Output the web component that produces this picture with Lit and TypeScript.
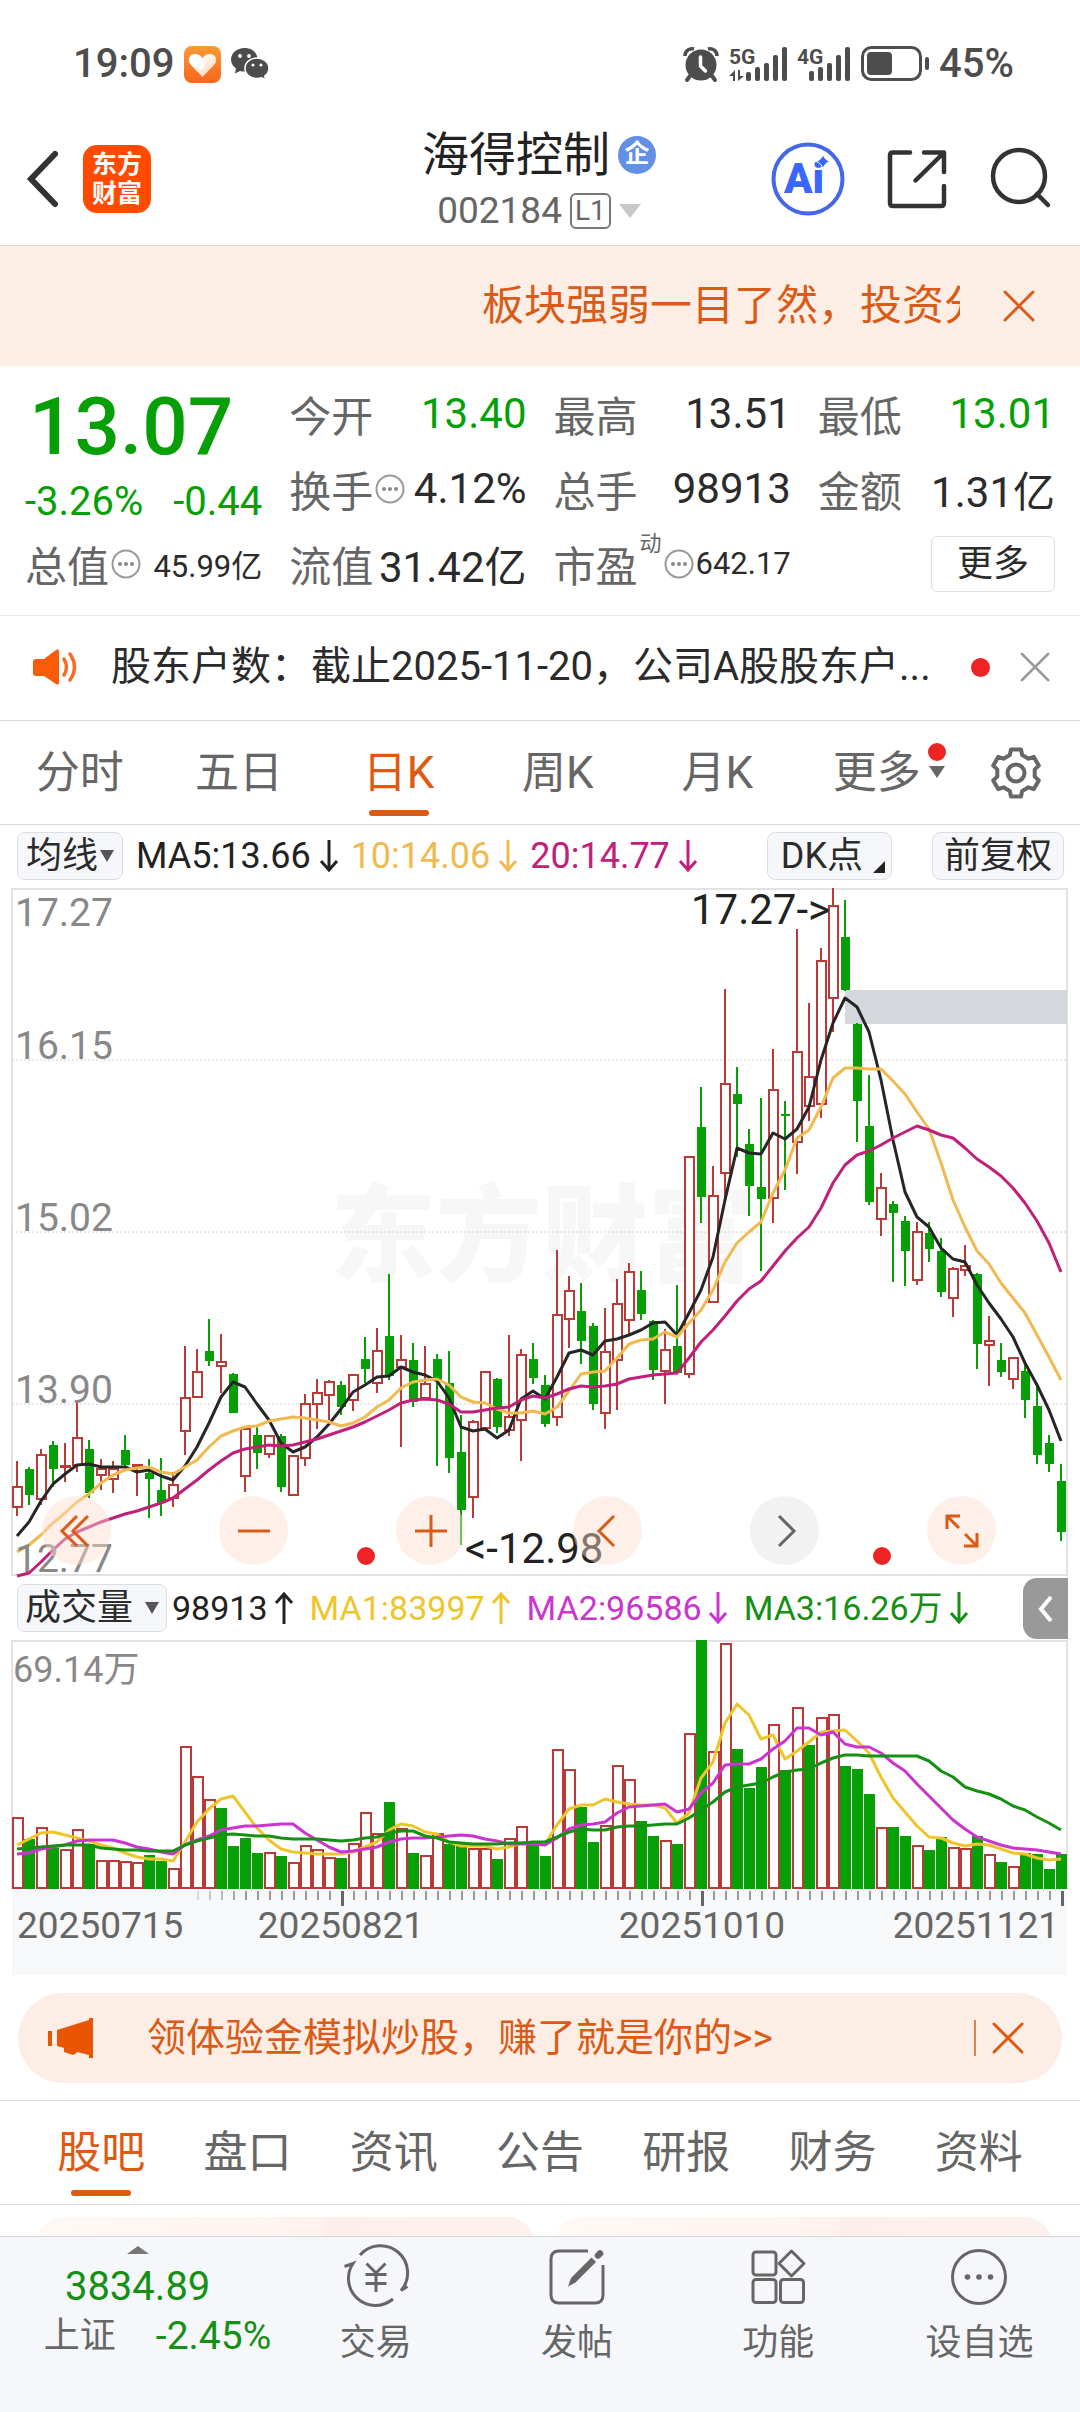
import { LitElement, html, svg, css } from "lit";
import { customElement, property, state } from "lit/decorators.js";
import { classMap } from "lit/directives/class-map.js";

/* ---------- chart data ---------- */

// One day: [direction, high, body top, body bottom, low] in thirds of a pixel from the chart origin.
type Day = [1 | 0, number, number, number, number];
const U = 1;
const D = 0;
const DAYS: Day[] = [
  [U, 693, 770, 832, 858], [D, 712, 716, 794, 825], [U, 657, 674, 808, 825], [D, 634, 644, 718, 770],
  [U, 638, 707, 711, 757], [U, 514, 623, 706, 727], [D, 629, 657, 790, 803], [U, 688, 718, 736, 780],
  [U, 693, 716, 748, 790], [D, 616, 661, 706, 712], [U, 705, 706, 710, 798], [D, 688, 730, 747, 863],
  [D, 684, 781, 818, 858], [U, 725, 766, 803, 830], [U, 348, 503, 603, 675], [U, 358, 425, 501, 501],
  [D, 266, 364, 393, 407], [U, 312, 397, 408, 490], [D, 430, 433, 549, 549], [U, 595, 598, 737, 785],
  [D, 587, 616, 669, 716], [U, 619, 619, 672, 683], [D, 612, 617, 770, 785], [U, 675, 679, 796, 798],
  [U, 491, 522, 685, 707], [U, 446, 490, 523, 597], [U, 450, 457, 496, 570], [D, 454, 464, 530, 554],
  [U, 432, 435, 511, 542], [D, 321, 386, 416, 459], [U, 294, 362, 459, 490], [D, 132, 318, 438, 450],
  [U, 316, 389, 411, 651], [D, 340, 390, 517, 531], [U, 348, 462, 505, 510], [D, 372, 386, 450, 707],
  [D, 363, 460, 683, 729], [D, 555, 667, 839, 945], [U, 570, 577, 801, 863], [U, 422, 425, 595, 600],
  [D, 445, 446, 591, 609], [U, 316, 560, 599, 618], [U, 358, 375, 571, 692], [D, 340, 386, 443, 461],
  [D, 435, 464, 582, 591], [U, 59, 255, 562, 587], [U, 138, 182, 268, 353], [D, 160, 243, 333, 403],
  [D, 280, 289, 522, 541], [U, 234, 366, 548, 597], [U, 147, 223, 391, 541], [U, 100, 126, 271, 312],
  [D, 124, 180, 251, 269], [D, 270, 272, 421, 449], [U, 297, 361, 424, 522], [D, 165, 348, 430, 433],
  [U, -219, -219, 433, 444], [D, -429, -309, -100, -21], [U, -193, -103, 216, 216], [U, -723, -439, -171, -90],
  [D, -488, -409, -379, -220], [D, -304, -258, -131, -42], [D, -396, -129, -94, 123], [U, -543, -420, -97, -20],
  [D, -387, -348, -343, -121], [U, -902, -535, -263, -167], [U, -681, -460, -372, -328], [U, -846, -807, -378, -337],
  [U, -1026, -973, -697, -595], [D, -990, -878, -719, -717], [D, -620, -617, -388, -263], [D, -465, -312, -85, -75],
  [U, -171, -127, -32, 17], [D, -87, -78, -52, 155], [D, -42, -28, 62, 168], [U, -23, 7, 151, 165],
  [D, -23, 10, 58, 96], [D, 25, 64, 186, 201], [U, 110, 117, 203, 261], [U, 45, 108, 119, 137],
  [D, 128, 133, 343, 417], [U, 258, 333, 345, 468], [D, 340, 390, 426, 440], [U, 381, 383, 446, 477],
  [D, 400, 423, 509, 564], [D, 470, 528, 674, 702], [D, 615, 639, 702, 725], [D, 703, 753, 905, 932],
];

const MA5 = [
  919, 875, 812, 763, 733, 706, 703, 712, 711, 712, 727, 720, 738, 749, 708, 650, 580, 500, 457, 472, 522, 570,
  640, 667, 652, 620, 583, 537, 487, 465, 442, 437, 410, 425, 435, 453, 505, 592, 604, 597, 624, 600, 508, 482,
  508, 440, 370, 360, 376, 333, 326, 315, 299, 280, 277, 314, 250, 180, 80, -90, -246, -230, -228, -290, -273,
  -304, -370, -510, -622, -697, -668, -593, -450, -270, -115, -38, -10, 53, 87, 97, 165, 220, 268, 320, 400, 465,
  540, 633,
];
const MA10 = [
  967, 945, 915, 880, 848, 815, 792, 760, 736, 721, 715, 712, 727, 731, 712, 690, 650, 618, 602, 592, 587, 574,
  568, 561, 563, 570, 577, 589, 578, 560, 530, 510, 475, 456, 451, 447, 466, 500, 515, 518, 537, 550, 549, 542,
  553, 532, 484, 433, 427, 422, 385, 342, 330, 327, 305, 322, 280, 240, 180, 95, 38, 5, -25, -110, -180, -275,
  -300, -370, -455, -485, -486, -482, -484, -448, -407, -355, -303, -200, -90, -10, 62, 103, 160, 205, 248, 315,
  380, 450,
];
const MA20 = [
  1038, 1028, 995, 960, 928, 905, 890, 877, 863, 853, 843, 830, 820, 803, 778, 750, 720, 692, 670, 658, 652, 645,
  648, 646, 637, 627, 614, 603, 590, 575, 557, 541, 520, 510, 507, 510, 522, 545, 546, 539, 535, 530, 510, 499,
  503, 492, 478, 467, 471, 468, 462, 446, 440, 435, 431, 429, 385, 335, 300, 258, 212, 178, 153, 108, 62, 25, -8,
  -65, -140, -195, -225, -237, -255, -277, -293, -313, -300, -285, -275, -247, -212, -188, -163, -125, -82, -28,
  40, 125,
];

const VOLUME = [
  741, 808, 771, 835, 837, 777, 823, 869, 870, 872, 877, 854, 874, 893, 527, 617, 687, 714, 828, 803, 849, 846,
  857, 875, 826, 838, 860, 864, 818, 726, 790, 697, 775, 849, 854, 790, 823, 823, 833, 833, 868, 803, 767, 825,
  859, 537, 598, 710, 816, 766, 586, 628, 752, 799, 810, 823, 489, 210, 543, 220, 537, 654, 591, 463, 600, 412,
  525, 440, 431, 588, 598, 672, 772, 772, 798, 824, 841, 802, 831, 835, 799, 851, 875, 887, 849, 851, 896, 851,
];
// Days whose volume bar takes the colour opposite to the candle.
const FLIPPED = new Set([9, 16, 17, 19, 29, 35, 66]);

const VMA1 = [
  826, 808, 790, 786, 796, 803, 812, 826, 834, 848, 862, 866, 868, 872, 815, 755, 718, 688, 677, 725, 775, 810,
  836, 847, 850, 851, 852, 853, 846, 832, 815, 780, 763, 768, 787, 793, 815, 829, 827, 828, 836, 830, 818, 820,
  822, 765, 718, 706, 704, 686, 695, 702, 706, 706, 713, 758, 730, 625, 575, 460, 402, 435, 508, 495, 568, 543,
  515, 487, 482, 479, 513, 550, 620, 683, 725, 768, 801, 805, 820, 827, 822, 825, 838, 850, 852, 863, 870, 866,
];
const VMA2 = [
  853, 848, 836, 832, 824, 814, 811, 811, 811, 820, 832, 838, 845, 853, 826, 810, 797, 781, 775, 769, 767, 765,
  763, 761, 788, 810, 830, 845, 843, 838, 830, 815, 808, 805, 805, 801, 797, 796, 797, 807, 813, 822, 823, 822,
  824, 803, 778, 766, 762, 755, 728, 711, 708, 705, 702, 727, 717, 670, 640, 585, 582, 582, 568, 538, 514, 474,
  475, 495, 487, 522, 530, 532, 550, 580, 602, 643, 678, 713, 750, 778, 802, 813, 824, 834, 838, 841, 845, 851,
];
const VMA3 = [
  838, 833, 831, 829, 826, 824, 824, 835, 838, 840, 841, 842, 842, 843, 825, 812, 803, 795, 793, 794, 797, 799,
  803, 806, 807, 808, 811, 812, 810, 804, 800, 790, 784, 784, 797, 805, 815, 820, 821, 822, 822, 820, 819, 815,
  816, 800, 787, 778, 780, 780, 772, 769, 767, 766, 762, 763, 745, 720, 695, 665, 650, 645, 638, 620, 605, 600,
  597, 580, 563, 555, 555, 557, 558, 557, 557, 557, 573, 603, 620, 652, 664, 673, 687, 707, 720, 740, 760, 780,
];

const dayX = (i: number) => 17 + 12 * i;
const priceY = (v: number) => Math.round(342 + v / 3);
const volumeY = (v: number) => Math.round((v - 210) / 3);
const line = (values: number[], y: (v: number) => number) => values.map((v, i) => `${dayX(i)},${y(v)}`).join(" ");

const FONT = css`
  :host {
    font-family: Roboto, "Noto Sans CJK SC", sans-serif;
  }
  button {
    font: inherit;
    color: inherit;
    background: none;
    border: 0;
    padding: 0;
    margin: 0;
    cursor: pointer;
  }
  svg {
    display: block;
    flex: none;
    overflow: visible;
  }
`;

/* ---------- icons ---------- */

const cross = (size: number, width: number) => html`
  <svg width=${size} height=${size} viewBox="0 0 32 32" fill="none" stroke="currentColor" stroke-width=${width}
    stroke-linecap="round" aria-hidden="true">
    <path d="M2 2 30 30M30 2 2 30" />
  </svg>`;

const arrow = (up: boolean) => html`
  <svg width="18" height="34" viewBox="0 0 18 34" fill="none" stroke="currentColor" stroke-width="3" aria-hidden="true">
    ${up ? svg`<path d="M9 33V3M1 12 9 3l8 9" />` : svg`<path d="M9 1v30M1 22l8 9 8-9" />`}
  </svg>`;

const infoDots = html`
  <svg width="30" height="30" viewBox="0 0 30 30" aria-hidden="true">
    <circle cx="15" cy="15" r="13.500" fill="none" stroke="#999" stroke-width="2" />
    <circle cx="9" cy="15" r="2" fill="#888" /><circle cx="15" cy="15" r="2" fill="#888" />
    <circle cx="21" cy="15" r="2" fill="#888" />
  </svg>`;

const gearPath = () => {
  const at = (r: number, deg: number) => {
    const a = (deg * Math.PI) / 180;
    return `${(28 + r * Math.cos(a)).toFixed(1)} ${(28 + r * Math.sin(a)).toFixed(1)}`;
  };
  const points: string[] = [];
  for (let k = 0; k < 6; k++) {
    const c = -90 + 60 * k;
    points.push(at(19, c - 19), at(24, c - 12), at(24, c + 12), at(19, c + 19));
  }
  return `M${points.join("L")}Z`;
};

const signal = (x: number, tops: number[]) =>
  tops.map((t, i) => svg`<rect x=${x + i * 9} y=${t} width="5" height=${35 - t} rx="2" />`);

/* ---------- status bar ---------- */

@customElement("status-bar")
class StatusBar extends LitElement {
  static styles = [
    FONT,
    css`
      :host {
        display: flex;
        align-items: center;
        justify-content: space-between;
        padding: 41px 66px 23px 73px;
        color: #4d4d4d;
        font-size: 40px;
        font-weight: 500;
        line-height: 46px;
      }
      .side {
        display: flex;
        align-items: center;
        gap: 10px;
      }
      .net {
        font-size: 21px;
        font-weight: 700;
      }
    `,
  ];
  render() {
    return html`
      <div class="side">
        <span>19:09</span>
        <svg width="37" height="37" viewBox="0 0 37 37" aria-hidden="true">
          <defs>
            <linearGradient id="o" x1="0" y1="0" x2="0" y2="1"><stop stop-color="#fb9a34" /><stop offset="1" stop-color="#f8651d" /></linearGradient>
            <linearGradient id="h" x1="0" y1="0" x2="1" y2="1"><stop offset=".3" stop-color="#fff" /><stop offset="1" stop-color="#ffc9a4" /></linearGradient>
          </defs>
          <rect width="37" height="37" rx="8" fill="url(#o)" />
          <path d="M18.500 31 6.500 18.500C2.500 13 6 8 11 8c3 0 5.500 1.500 7.500 4C20.500 9.500 23 8 26 8c5 0 8.500 5 4.500 10.500Z" fill="url(#h)" />
          <path d="M11 13.500 17 19.500" stroke="#fff" stroke-width="7" stroke-linecap="round" />
        </svg>
        <svg width="38" height="32" viewBox="0 0 38 32" fill="#4d4d4d" aria-hidden="true">
          <path d="M13.500 0C6 0 0 5 0 11.500c0 3.700 2 6.800 5 9L4 25.500l5-2.600c1.500.4 3 .6 4.500.6 6.500 0 13-5 13-12S21 0 13.500 0Z" />
          <circle cx="9" cy="8" r="1.900" fill="#fff" /><circle cx="18" cy="8" r="1.900" fill="#fff" />
          <path d="M26 10c6.500 0 12 4.400 12 10.200 0 3.200-1.700 6-4.200 7.800l1 3.800-4.200-2c-1.400.5-3 .7-4.600.7-6.700 0-12-4.500-12-10.300C14 14.400 19.300 10 26 10Z" stroke="#fff" stroke-width="1.500" />
          <circle cx="22" cy="17" r="1.600" fill="#fff" /><circle cx="30" cy="17" r="1.600" fill="#fff" />
        </svg>
      </div>
      <div class="side">
        <svg width="36" height="36" viewBox="0 0 36 36" aria-hidden="true">
          <circle cx="18" cy="19" r="15.500" fill="#4d4d4d" />
          <path d="M2 10a7 7 0 0 1 9-7M34 10a7 7 0 0 0-9-7" fill="none" stroke="#4d4d4d" stroke-width="3.500" />
          <path d="M7 30 4 34M29 30l3 4" stroke="#4d4d4d" stroke-width="4" stroke-linecap="round" />
          <path d="M17.500 11v9l5 5" fill="none" stroke="#fff" stroke-width="3.500" stroke-linecap="round" />
        </svg>
        <svg class="net" width="58" height="36" viewBox="0 0 58 36" fill="#4d4d4d" role="img" aria-label="5G">
          <text x="0" y="18">5G</text>
          <path d="M0 30 6 24V35H4V30ZM9 24v11l6-5H11V24Z" />
          ${signal(17, [26, 21, 17, 9, 1])}
        </svg>
        <svg class="net" width="54" height="36" viewBox="0 0 54 36" fill="#4d4d4d" role="img" aria-label="4G">
          <text x="0" y="18">4G</text>
          ${signal(12, [25, 21, 17, 9, 1])}
        </svg>
        <svg width="68" height="36" viewBox="0 0 68 36" aria-hidden="true">
          <rect x="1.500" y="1.500" width="58" height="32" rx="9" fill="none" stroke="#4d4d4d" stroke-width="3" />
          <rect x="6" y="6" width="25" height="23" rx="4" fill="#4d4d4d" />
          <rect x="64" y="11" width="4" height="13" rx="2" fill="#4d4d4d" />
        </svg>
        <span>45%</span>
      </div>`;
  }
}

/* ---------- title bar ---------- */

@customElement("title-bar")
class TitleBar extends LitElement {
  static styles = [
    FONT,
    css`
      :host {
        display: grid;
        grid-template-columns: 1fr auto 1fr;
        align-items: center;
        padding: 17px 29px 14px 27px;
        border-bottom: 1px solid #d8d8d8;
        color: #2b2b2b;
      }
      .left,
      .right {
        display: flex;
        align-items: center;
      }
      .left {
        gap: 24px;
      }
      .right {
        justify-content: flex-end;
        gap: 42px;
      }
      .logo {
        width: 68px;
        height: 68px;
        border-radius: 14px;
        background: #ff4a00;
        color: #fff;
        font-size: 25px;
        line-height: 29px;
        font-weight: 700;
        display: grid;
        place-content: center;
        text-align: center;
      }
      .name {
        margin: 0;
        display: flex;
        align-items: center;
        justify-content: center;
        gap: 8px;
        font-size: 47px;
        line-height: 56px;
        font-weight: 400;
        color: #222;
      }
      .badge {
        width: 38px;
        height: 38px;
        border-radius: 50%;
        background: #6290e4;
        color: #fff;
        font-size: 25px;
        line-height: 36px;
        font-weight: 700;
        text-align: center;
      }
      .code {
        display: flex;
        align-items: center;
        justify-content: center;
        gap: 8px;
        margin-top: 8px;
        font-size: 37px;
        line-height: 40px;
        color: #666;
      }
      .level {
        border: 2px solid #777;
        border-radius: 6px;
        padding: 0 3px;
        font-size: 28px;
        line-height: 32px;
      }
      .caret {
        border: 11px solid transparent;
        border-top: 14px solid #c8c8c8;
        border-bottom: 0;
      }
      .ai {
        font-size: 42px;
        font-weight: 900;
      }
    `,
  ];
  render() {
    return html`
      <div class="left">
        <button aria-label="返回">
          <svg width="32" height="58" viewBox="0 0 32 58" fill="none" stroke="#333" stroke-width="6" stroke-linecap="round">
            <path d="M28 4 4 29 28 54" />
          </svg>
        </button>
        <span class="logo">东方<br />财富</span>
      </div>
      <div>
        <h1 class="name">海得控制<span class="badge">企</span></h1>
        <div class="code"><span>002184</span><span class="level">L1</span><i class="caret"></i></div>
      </div>
      <div class="right">
        <button aria-label="AI">
          <svg width="74" height="74" viewBox="0 0 74 74">
            <circle cx="37" cy="37" r="34.500" fill="none" stroke="#4568e8" stroke-width="4" />
            <text class="ai" x="13" y="51" fill="#3a66ff">Ai</text>
            <path d="M52 12q1.500 6 7 7.500-5.500 1.500-7 7.500-1.500-6-7-7.500 5.500-1.500 7-7.500Z" fill="#3a66ff" stroke="#fff" stroke-width="1" />
          </svg>
        </button>
        <button aria-label="分享">
          <svg width="60" height="60" viewBox="0 0 60 60" fill="none" stroke="#333" stroke-width="4.500" stroke-linecap="round" stroke-linejoin="round">
            <path d="M23 3.500H6q-3 0-3 3V54q0 3 3 3H54q3 0 3-3V37M37 3.500H57V23M28.500 31.500 56 4.500" />
          </svg>
        </button>
        <button aria-label="搜索">
          <svg width="62" height="62" viewBox="0 0 62 62" fill="none" stroke="#333" stroke-width="4.500" stroke-linecap="round">
            <circle cx="30" cy="28" r="26" /><path d="M48 46 59 57" />
          </svg>
        </button>
      </div>`;
  }
}

/* ---------- quote summary ---------- */

@customElement("quote-panel")
class QuotePanel extends LitElement {
  static styles = [
    FONT,
    css`
      :host {
        display: grid;
        grid-template-columns: repeat(4, minmax(0, 1fr));
        grid-auto-rows: 75px;
        column-gap: 27px;
        padding: 10px 25px 14px;
        border-bottom: 1px solid #e8e8e8;
        font-size: 42px;
        color: #2b2b2b;
      }
      .main {
        grid-row: span 2;
        color: #06a006;
      }
      .price {
        font-size: 80px;
        line-height: 102px;
        font-weight: 500;
        padding-left: 4px;
      }
      .change {
        display: flex;
        justify-content: space-between;
        font-size: 40px;
        line-height: 48px;
      }
      .cell {
        display: flex;
        align-items: center;
        justify-content: space-between;
        white-space: nowrap;
      }
      .label {
        display: flex;
        align-items: center;
        gap: 2px;
        color: #666;
      }
      .sup {
        font-size: 22px;
        line-height: 22px;
        align-self: flex-start;
      }
      .down {
        color: #06a006;
      }
      .small {
        font-size: 31px;
      }
      .more {
        justify-self: end;
        align-self: center;
        padding: 0 25px;
        border: 1px solid #dedfe2;
        border-radius: 6px;
        font-size: 36px;
        line-height: 54px;
      }
    `,
  ];
  private cell(label: string, value: string, opt: { info?: boolean; tone?: string; sup?: string } = {}) {
    return html`<div class="cell">
      <span class="label">${label}${opt.sup ? html`<span class="sup">${opt.sup}</span>` : ""}${opt.info ? infoDots : ""}</span>
      <span class=${opt.tone ?? ""}>${value}</span>
    </div>`;
  }
  render() {
    return html`
      <div class="main">
        <div class="price">13.07</div>
        <div class="change"><span>-3.26%</span><span>-0.44</span></div>
      </div>
      ${this.cell("今开", "13.40", { tone: "down" })} ${this.cell("最高", "13.51")}
      ${this.cell("最低", "13.01", { tone: "down" })} ${this.cell("换手", "4.12%", { info: true })}
      ${this.cell("总手", "98913")} ${this.cell("金额", "1.31亿")}
      ${this.cell("总值", "45.99亿", { info: true, tone: "small" })} ${this.cell("流值", "31.42亿")}
      ${this.cell("市盈", "642.17", { info: true, tone: "small", sup: "动" })}
      <button class="more">更多</button>`;
  }
}

/* ---------- candle chart ---------- */

@customElement("kline-chart")
class KlineChart extends LitElement {
  static styles = [
    FONT,
    css`
      :host {
        display: block;
        position: relative;
      }
      .plot {
        width: 100%;
        height: auto;
      }
      .axis {
        font-size: 39px;
        fill: #888;
      }
      .note {
        font-size: 42px;
        fill: #222;
      }
      .mark {
        font-size: 106px;
        font-weight: 900;
        fill: #f7f7f7;
      }
      .tools {
        position: absolute;
        left: 42px;
        right: 84px;
        bottom: 11px;
        display: flex;
        justify-content: space-between;
      }
      .tool {
        width: 69px;
        height: 69px;
        border-radius: 50%;
        background: rgba(252, 222, 203, 0.45);
        color: #d95b17;
        display: grid;
        place-content: center;
      }
      .off {
        background: rgba(230, 230, 230, 0.5);
        color: #666;
      }
    `,
  ];
  private icons: [string, string, boolean][] = [
    ["最早", "M17 2 2 17 17 32M28 2 13 17 28 32", false],
    ["缩小", "M1 17H33", false],
    ["放大", "M1 17H33M17 1V33", false],
    ["前移", "M23 2 8 17 23 32", false],
    ["后移", "M11 2 26 17 11 32", true],
    ["全屏", "M2 15V2H15M2 2 14 14M32 19V32H19M32 32 20 20", false],
  ];
  private candle([up, high, top, bottom, low]: Day, i: number) {
    const x = dayX(i);
    const t = priceY(top);
    const b = priceY(bottom);
    return up
      ? svg`<g stroke="#b93a36" stroke-width="2" fill="#fff">
          <path d=${`M${x} ${priceY(high)}V${t}M${x} ${b}V${priceY(low)}`} />
          <rect x=${x - 4} y=${t} width="9" height=${Math.max(b - t, 1)} />
        </g>`
      : svg`<g fill="#06a006">
          <rect x=${x - 1} y=${priceY(high)} width="2" height=${priceY(low) - priceY(high)} />
          <rect x=${x - 4} y=${t} width="9" height=${Math.max(b - t, 2)} />
        </g>`;
  }
  render() {
    return html`
      <svg class="plot" viewBox="0 0 1080 688" role="img" aria-label="日K线">
        <text class="mark" x="330" y="385">东方财富</text>
        <path d="M12 172H1067M12 344H1067M12 516H1067" stroke="#d0d0d0" stroke-width="1" stroke-dasharray="2 2" />
        <path d="M12 1H1067V687H12Z" fill="none" stroke="#e2e2e4" stroke-width="2" />
        <rect x="845" y="102" width="222" height="34" fill="#d4d7dc" />
        ${DAYS.map((d, i) => this.candle(d, i))}
        <g fill="none" stroke-width="3" stroke-linejoin="round">
          <polyline points=${line(MA5, priceY)} stroke="#262626" />
          <polyline points=${line(MA10, priceY)} stroke="#f0ba50" />
          <polyline points=${line(MA20, priceY)} stroke="#bf2079" />
        </g>
        <g class="axis">
          <text x="15" y="38">17.27</text><text x="15" y="171">16.15</text><text x="15" y="343">15.02</text>
          <text x="15" y="515">13.90</text><text x="15" y="684">12.77</text>
        </g>
        <g class="note">
          <text x="830" y="36" text-anchor="end">17.27-&gt;</text>
          <text x="465" y="675">&lt;-12.98</text>
        </g>
        <circle cx="366" cy="668" r="9" fill="#ee2424" /><circle cx="882" cy="668" r="9" fill="#ee2424" />
      </svg>
      <div class="tools">
        ${this.icons.map(
          ([label, d, off]) => html`<button class=${classMap({ tool: true, off })} aria-label=${label}>
            <svg width="34" height="34" viewBox="0 0 34 34" fill="none" stroke="currentColor" stroke-width="3"><path d=${d} /></svg>
          </button>`,
        )}
      </div>`;
  }
}

/* ---------- volume chart with the date axis ---------- */

@customElement("volume-chart")
class VolumeChart extends LitElement {
  static styles = [
    FONT,
    css`
      :host {
        display: block;
      }
      .plot {
        width: 100%;
        height: auto;
      }
      .axis {
        font-size: 36px;
        fill: #888;
      }
      .dates {
        font-size: 37px;
        fill: #666;
      }
    `,
  ];
  private bar(v: number, i: number) {
    const up = Boolean(DAYS[i][0]) !== FLIPPED.has(i);
    const y = volumeY(v);
    return up
      ? svg`<rect x=${dayX(i) - 4} y=${y + 1} width="10" height=${247 - y} fill="#fff" stroke="#b93a36" stroke-width="2" />`
      : svg`<rect x=${dayX(i) - 5} y=${y} width="11" height=${249 - y} fill="#06a006" />`;
  }
  render() {
    const ticks = VOLUME.map((_, i) => i).filter((i) => i >= 15);
    return html`
      <svg class="plot" viewBox="0 0 1080 335" role="img" aria-label="成交量">
        <path d="M12 249V1H1067V249" fill="none" stroke="#e2e2e4" stroke-width="2" />
        <rect x="12" y="250" width="1055" height="85" fill="#f7f8fa" />
        <text class="axis" x="13" y="42">69.14万</text>
        ${VOLUME.map((v, i) => this.bar(v, i))}
        <g fill="none" stroke-width="3" stroke-linejoin="round">
          <polyline points=${line(VMA1, volumeY)} stroke="#efc52c" />
          <polyline points=${line(VMA2, volumeY)} stroke="#cb35cf" />
          <polyline points=${line(VMA3, volumeY)} stroke="#159015" />
        </g>
        ${ticks.map((i) =>
          i % 30 === 27
            ? svg`<rect x=${dayX(i)} y="251" width="3" height="15" fill="#666" />`
            : svg`<rect x=${dayX(i)} y="251" width="2" height="9" fill="#999" opacity=${Math.min(1, (i - 13) / 6)} />`,
        )}
        <g class="dates">
          <text x="17" y="298">20250715</text>
          <text x="341" y="298" text-anchor="middle">20250821</text>
          <text x="702" y="298" text-anchor="middle">20251010</text>
          <text x="1059" y="298" text-anchor="end">20251121</text>
        </g>
      </svg>`;
  }
}

/* ---------- bottom bar ---------- */

@customElement("bottom-bar")
class BottomBar extends LitElement {
  static styles = [
    FONT,
    css`
      :host {
        display: grid;
        grid-template-columns: 275fr repeat(4, 201fr);
        border-top: 1px solid #d4d5d8;
        background: #f6f7fa;
        color: #666;
        font-size: 36px;
        line-height: 44px;
      }
      .index {
        display: flex;
        flex-direction: column;
        align-items: center;
        padding-top: 9px;
      }
      .peak {
        border: 11px solid transparent;
        border-bottom: 8px solid #777;
        border-top: 0;
      }
      .value {
        margin-top: 11px;
        font-size: 40px;
        color: #159015;
      }
      .row {
        display: flex;
        align-self: flex-end;
        gap: 40px;
        margin-top: 5px;
        padding-right: 4px;
      }
      .pct {
        font-size: 39px;
        color: #159015;
      }
      .item {
        display: flex;
        flex-direction: column;
        align-items: center;
        gap: 12px;
        padding: 8px 0 47px;
      }
    `,
  ];
  private item(label: string, icon: unknown) {
    return html`<button class="item">
      <svg width="64" height="64" viewBox="0 0 64 64" fill="none" stroke="#666" stroke-width="3">${icon}</svg>
      <span>${label}</span>
    </button>`;
  }
  render() {
    return html`
      <button class="index">
        <i class="peak"></i>
        <span class="value">3834.89</span>
        <span class="row"><span>上证</span><span class="pct">-2.45%</span></span>
      </button>
      ${this.item(
        "交易",
        svg`<path d="M16 10A27 27 0 0 1 57 45.500L63.500 41.500M49 54A27 27 0 0 1 9 18.500L0.500 21.500" />
          <path d="M22.500 18.500 32 28 41.500 18.500M21.500 29.500H42.500M21.500 38.500H42.500M32 28V47" />`,
      )}
      ${this.item(
        "发帖",
        svg`<path d="M43 6H14Q6 6 6 14V50Q6 58 14 58H50Q58 58 58 50V20" />
          <path d="M23 41.500 26 33 46.500 12.500 51 17 30.500 37.500Z" fill="#666" stroke="none" />
          <path d="M53 10.500 55 8.500" stroke-width="6.500" stroke-linecap="round" />`,
      )}
      ${this.item(
        "功能",
        svg`<rect x="7" y="7" width="23" height="23" rx="3" /><rect x="7" y="34.500" width="23" height="23" rx="3" />
          <rect x="34.500" y="34.500" width="23" height="23" rx="3" />
          <path d="M45.500 6 58 18.500 45.500 31 33 18.500Z" stroke-linejoin="round" />`,
      )}
      ${this.item(
        "设自选",
        svg`<circle cx="32" cy="32" r="26.500" />
          <g fill="#666" stroke="none"><circle cx="20.500" cy="32" r="2.800" /><circle cx="32" cy="32" r="2.800" /><circle cx="43.500" cy="32" r="2.800" /></g>`,
      )}`;
  }
}

/* ---------- tab strip ---------- */

@customElement("tab-strip")
class TabStrip extends LitElement {
  @property({ attribute: false }) tabs: string[] = [];
  @property({ type: Number }) active = 0;
  @property({ type: Boolean }) marked = false;
  static styles = [
    FONT,
    css`
      :host {
        display: flex;
        flex: 1;
      }
      .tab {
        flex: 1 1 0;
        display: flex;
        flex-direction: column;
        align-items: center;
        gap: 5px;
        font-size: 44px;
        line-height: 64px;
        color: #666;
      }
      .on {
        color: #dd5a10;
      }
      .bar {
        width: 60px;
        height: 6px;
        border-radius: 3px;
      }
      .on .bar {
        background: #dd5a10;
      }
      .text {
        position: relative;
      }
      .caret {
        position: absolute;
        left: 100%;
        top: 25px;
        margin-left: 8px;
        border: 8px solid transparent;
        border-top: 12px solid #666;
        border-bottom: 0;
      }
      .dot {
        position: absolute;
        left: 100%;
        top: 2px;
        margin-left: 7px;
        width: 18px;
        height: 18px;
        border-radius: 50%;
        background: #ee2424;
      }
    `,
  ];
  render() {
    return this.tabs.map((t, i) => {
      const extra = this.marked && i === this.tabs.length - 1;
      return html`<button class=${classMap({ tab: true, on: i === this.active })} @click=${() => (this.active = i)}>
        <span class="text">${t}${extra ? html`<i class="caret"></i><i class="dot"></i>` : ""}</span>
        <span class="bar"></span>
      </button>`;
    });
  }
}

/* ---------- page ---------- */

@customElement("app-root")
class AppRoot extends LitElement {
  @state() private periods = ["分时", "五日", "日K", "周K", "月K", "更多"];
  @state() private sections = ["股吧", "盘口", "资讯", "公告", "研报", "财务", "资料"];
  static styles = [
    FONT,
    css`
      :host {
        display: flex;
        flex-direction: column;
        min-height: 100vh;
        background: #fff;
        color: #2b2b2b;
      }
      .notice {
        display: flex;
        align-items: center;
        justify-content: space-between;
        padding: 30px 45px 30px 482px;
        background: #fdeee5;
        color: #d95b17;
        font-size: 42px;
        line-height: 60px;
      }
      .marquee {
        flex: 0 1 478px;
        min-width: 0;
        overflow: hidden;
        white-space: nowrap;
      }
      .news {
        display: flex;
        align-items: center;
        padding: 21px 30px 23px 33px;
        border-bottom: 1px solid #d8d8d8;
        font-size: 40px;
        line-height: 60px;
      }
      .headline {
        flex: 1;
        min-width: 0;
        margin-left: 32px;
        white-space: nowrap;
        overflow: hidden;
      }
      .dot {
        width: 19px;
        height: 19px;
        margin: 0 30px;
        border-radius: 50%;
        background: #ee2424;
      }
      .faint {
        color: #999;
      }
      .periods {
        display: grid;
        grid-template-columns: 8fr 1fr;
        padding: 20px 4px 8px 0;
        border-bottom: 1px solid #d8d8d8;
      }
      .gear {
        justify-self: center;
        align-self: start;
        padding-top: 4px;
      }
      .legend {
        display: flex;
        align-items: center;
        padding: 7px 16px 8px 17px;
        font-size: 36px;
        line-height: 46px;
        white-space: nowrap;
      }
      .chip {
        display: flex;
        align-items: center;
        gap: 2px;
        padding: 0 8px;
        border: 1px solid #dcdee2;
        border-radius: 8px;
        background: #f6f7fa;
      }
      .caret {
        border: 7px solid transparent;
        border-top: 12px solid #555;
        border-bottom: 0;
      }
      .corner {
        align-self: flex-end;
        margin: 0 0 6px 8px;
        border-left: 12px solid transparent;
        border-bottom: 12px solid #222;
      }
      .ma {
        display: flex;
        align-items: center;
        gap: 9px;
        margin-left: 13px;
      }
      .gap {
        flex: 1;
      }
      .adjust {
        margin-left: 40px;
        padding: 0 11px;
      }
      .dk {
        padding: 0 6px 0 13px;
      }
      .volume {
        padding: 8px 12px 8px 17px;
        font-size: 34px;
      }
      .volume .chip {
        padding: 0 7px;
        font-size: 36px;
        gap: 12px;
      }
      .volume .ma {
        gap: 7px;
        margin-left: 17px;
      }
      .volume .first {
        margin-left: 5px;
      }
      .drawer {
        align-self: stretch;
        margin: -6px 0 -7px;
        padding: 0 15px;
        border-radius: 14px 0 0 14px;
        background: #999;
        color: #fff;
        display: flex;
        align-items: center;
      }
      .black { color: #222; }
      .amber { color: #f0ba50; }
      .magenta { color: #bf2079; }
      .yellow { color: #efc52c; }
      .purple { color: #cb35cf; }
      .green { color: #159015; }
      .promo {
        display: flex;
        align-items: center;
        margin: 18px 18px 17px;
        padding: 20px 38px 20px 30px;
        border-radius: 45px;
        background: #fdeee5;
        font-size: 39px;
        line-height: 50px;
      }
      .promo a {
        flex: 1;
        margin-left: 53px;
        color: #d95b17;
        text-decoration: none;
      }
      .close {
        padding-left: 16px;
        border-left: 2px solid #d9834f;
        color: #d95b17;
        height: 36px;
      }
      .sections {
        display: flex;
        padding: 20px 28px 8px;
        border-top: 1px solid #d8d8d8;
        border-bottom: 1px solid #d8d8d8;
      }
      .feed {
        flex: 1 0 30px;
        height: 30px;
        overflow: hidden;
        display: grid;
        grid-template-columns: 1fr 1fr;
        gap: 21px;
        padding: 0 29px 0 37px;
      }
      .card {
        margin-top: 12px;
        height: 120px;
        border-radius: 26px;
        background: linear-gradient(90deg, #fff8f5, #fef3ef 57%, #fdeeeb 58%, #fdf1ee);
      }
    `,
  ];
  render() {
    return html`
      <status-bar></status-bar>
      <title-bar></title-bar>
      <div class="notice">
        <span class="marquee">板块强弱一目了然，投资分</span>
        <button aria-label="关闭">${cross(32, 3)}</button>
      </div>
      <quote-panel></quote-panel>
      <div class="news">
        <svg width="46" height="38" viewBox="0 0 46 38" aria-hidden="true">
          <path d="M3 11h8L23 2q3-2 3 2V34q0 4-3 2L11 28H3q-3 0-3-3V14q0-3 3-3Z" fill="#fb5a08" />
          <path d="M31 11q5 8 0 16M37 6q9 13 0 26" fill="none" stroke="#fb6a20" stroke-width="3.500" stroke-linecap="round" />
        </svg>
        <span class="headline">股东户数：截止2025-11-20，公司A股股东户...</span>
        <i class="dot"></i>
        <button class="faint" aria-label="关闭">${cross(30, 3)}</button>
      </div>
      <nav class="periods">
        <tab-strip .tabs=${this.periods} .active=${2} marked></tab-strip>
        <button class="gear" aria-label="设置">
          <svg width="56" height="56" viewBox="0 0 56 56" fill="none" stroke="#666" stroke-width="4" stroke-linejoin="round">
            <path d=${gearPath()} /><circle cx="28" cy="28" r="8.500" />
          </svg>
        </button>
      </nav>
      <div class="legend">
        <button class="chip">均线<i class="caret"></i></button>
        <span class="ma black">MA5:13.66${arrow(false)}</span>
        <span class="ma amber">10:14.06${arrow(false)}</span>
        <span class="ma magenta">20:14.77${arrow(false)}</span>
        <span class="gap"></span>
        <button class="chip dk">DK点<i class="corner"></i></button>
        <button class="chip adjust">前复权</button>
      </div>
      <kline-chart></kline-chart>
      <div class="legend volume">
        <button class="chip">成交量<i class="caret"></i></button>
        <span class="ma first black">98913${arrow(true)}</span>
        <span class="ma yellow">MA1:83997${arrow(true)}</span>
        <span class="ma purple">MA2:96586${arrow(false)}</span>
        <span class="ma green">MA3:16.26万${arrow(false)}</span>
        <span class="gap"></span>
        <button class="drawer" aria-label="展开">
          <svg width="15" height="28" viewBox="0 0 15 28" fill="none" stroke="currentColor" stroke-width="4"><path d="M13 2 3 14 13 26" /></svg>
        </button>
      </div>
      <volume-chart></volume-chart>
      <div class="promo">
        <svg width="46" height="40" viewBox="0 0 46 40" fill="#ea5504" aria-hidden="true">
          <path d="M0 13h4v15H0ZM9 12 41 2V0h4V40H41V37L29 34q-2 4-7 2l-6-2V30L9 28Z" />
        </svg>
        <a href="#">领体验金模拟炒股，赚了就是你的&gt;&gt;</a>
        <button class="close" aria-label="关闭">${cross(32, 3)}</button>
      </div>
      <nav class="sections"><tab-strip .tabs=${this.sections}></tab-strip></nav>
      <div class="feed"><div class="card"></div><div class="card"></div></div>
      <bottom-bar></bottom-bar>`;
  }
}
